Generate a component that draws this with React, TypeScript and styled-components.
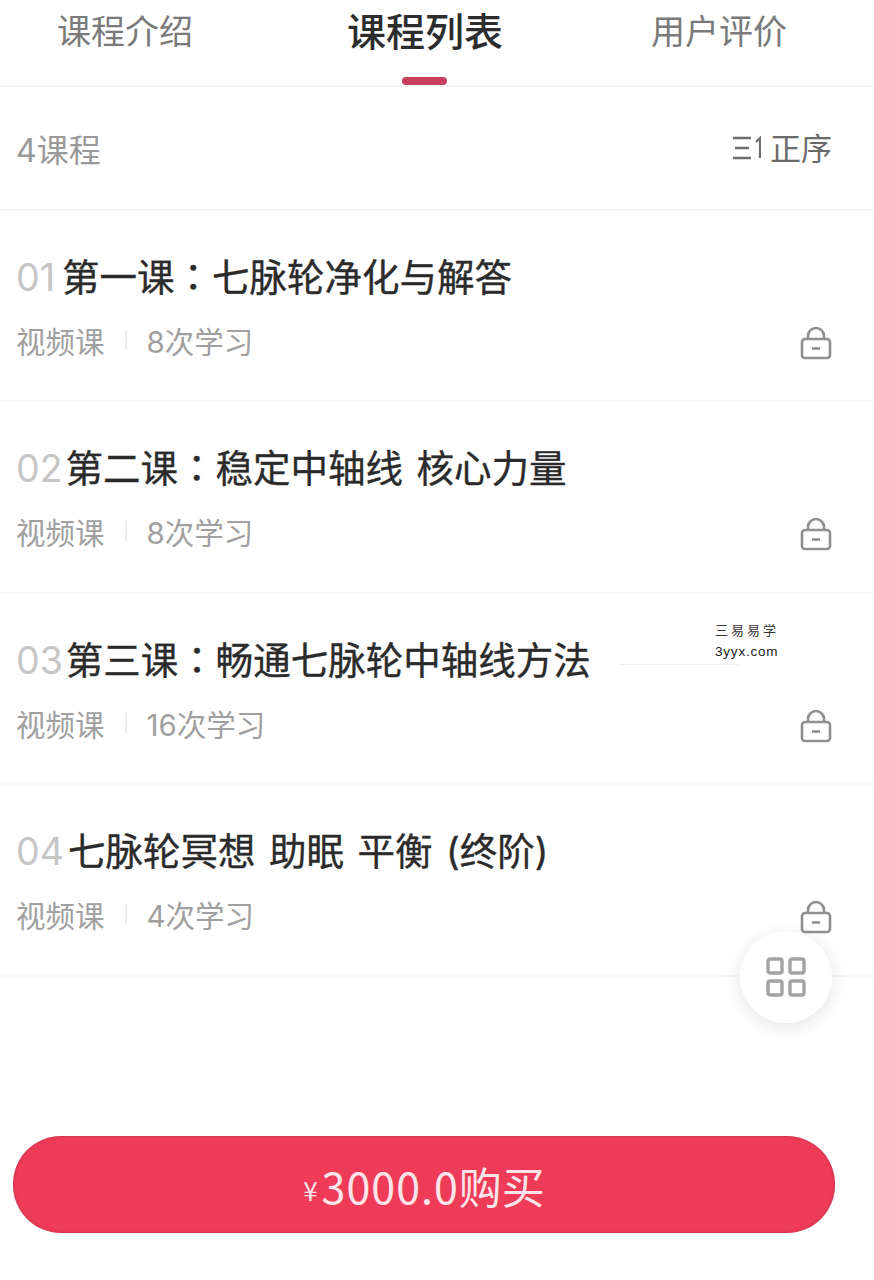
import React from 'react';
import styled, { createGlobalStyle } from 'styled-components';

const lessons = [
  { no: '01', gap: 7, label: '第一课', title: '七脉轮净化与解答', count: '8次学习' },
  { no: '02', gap: 3, label: '第二课', title: '稳定中轴线 核心力量', count: '8次学习' },
  { no: '03', gap: 3, label: '第三课', title: '畅通七脉轮中轴线方法', count: '16次学习' },
  { no: '04', gap: 4, label: '', title: '七脉轮冥想 助眠 平衡 (终阶)', count: '4次学习' },
];

const LockIcon = () => (
  <svg width="32" height="34" viewBox="0 0 32 34" fill="none" stroke="#8f8f8f" strokeWidth="2.6">
    <rect x="2" y="13" width="28" height="19" rx="3" />
    <path d="M8 13V10a8 8 0 0 1 16 0v3" />
    <path d="M12 22.5h8" />
  </svg>
);

const SortIcon = () => (
  <svg width="28" height="24" viewBox="0 0 28 24" fill="none" stroke="#6e6e6e" strokeWidth="2.6">
    <path d="M0 2h18M2 12h14M0 22h18" />
    <path d="M27 22V2l-4 4" strokeWidth="2.2" />
  </svg>
);

const GridIcon = () => (
  <svg width="40" height="40" viewBox="0 0 40 40" fill="none" stroke="#a3a3a3" strokeWidth="3.4">
    <rect x="2" y="2" width="14" height="14" rx="2" />
    <rect x="24" y="2" width="14" height="14" rx="2" />
    <rect x="2" y="24" width="14" height="14" rx="2" />
    <rect x="24" y="24" width="14" height="14" rx="2" />
  </svg>
);

const App: React.FC = () => (
  <Page>
    <GlobalStyle />
    <Tabs>
      <Tab>课程介绍</Tab>
      <ActiveTab>课程列表</ActiveTab>
      <Tab>用户评价</Tab>
    </Tabs>
    <SortBar>
      <Total>4课程</Total>
      <SortToggle>
        <SortIcon />
        <SortLabel>正序</SortLabel>
      </SortToggle>
    </SortBar>
    <List>
      {lessons.map(lesson => (
        <Lesson key={lesson.no}>
          <LessonTitle>
            <LessonNo $gap={lesson.gap}>{lesson.no}</LessonNo>
            {lesson.label && (
              <>
                {lesson.label}
                <Colon>：</Colon>
              </>
            )}
            {lesson.title}
          </LessonTitle>
          <LessonMeta>
            <MetaText>视频课</MetaText>
            <MetaDivider />
            <MetaText>{lesson.count}</MetaText>
            <LockSlot>
              <LockIcon />
            </LockSlot>
          </LessonMeta>
        </Lesson>
      ))}
    </List>
    <FloatingButton>
      <GridIcon />
    </FloatingButton>
    <Watermark>
      <span>三易易学</span>
      <WatermarkUrl>3yyx.com</WatermarkUrl>
    </Watermark>
    <BuyBar>
      <BuyButton>
        <Currency>¥</Currency>
        <Amount>3000.0</Amount>购买
      </BuyButton>
    </BuyBar>
  </Page>
);

const GlobalStyle = createGlobalStyle`
  html, body {
    margin: 0;
    padding: 0;
    background: #fff;
  }
`;

const Page = styled.div`
  position: relative;
  width: 874px;
  height: 1280px;
  overflow: hidden;
  display: flex;
  flex-direction: column;
  background: #fff;
  font-family: "Inter", "Noto Sans CJK SC", sans-serif;
`;

const Tabs = styled.div`
  display: grid;
  grid-template-columns: 347px 304px 1fr;
  height: 87px;
  box-sizing: border-box;
  border-bottom: 2px solid #f5f5f5;
`;

const Tab = styled.div`
  position: relative;
  padding-top: 7px;
  font-size: 34px;
  line-height: 50px;
  color: #7a7a7a;
  &:first-child {
    padding-left: 57px;
  }
`;

const ActiveTab = styled(Tab)`
  font-size: 39px;
  font-weight: 500;
  color: #2d2d2d;
  &::after {
    content: '';
    position: absolute;
    left: 55px;
    top: 77px;
    width: 45px;
    height: 8px;
    border-radius: 4px;
    background: #c8405f;
  }
`;

const SortBar = styled.div`
  display: flex;
  align-items: center;
  justify-content: space-between;
  height: 124px;
  padding: 0 42px 0 16px;
  border-bottom: 2px solid #f5f5f5;
  box-sizing: border-box;
`;

const Total = styled.span`
  font-size: 32px;
  color: #999;
`;

const SortToggle = styled.div`
  display: flex;
  align-items: center;
  gap: 9px;
  font-size: 31px;
  color: #6a6a6a;
`;

const SortLabel = styled.span`
  margin-top: -4px;
`;

const List = styled.div`
  display: flex;
  flex-direction: column;
`;

const Lesson = styled.div`
  height: 191.4px;
  box-sizing: border-box;
  padding: 39px 42px 0 16px;
  border-bottom: 2px solid #f7f7f7;
`;

const LessonTitle = styled.div`
  height: 56px;
  font-size: 37.5px;
  line-height: 56px;
  color: #2b2b2b;
  white-space: nowrap;
  word-spacing: 3px;
  -webkit-text-stroke: 0.35px #2b2b2b;
`;

const LessonNo = styled.span<{ $gap: number }>`
  margin-right: ${props => props.$gap}px;
  color: #c6c6c6;
  -webkit-text-stroke: 0;
`;

const Colon = styled.span`
  font-family: "Noto Sans CJK TC", sans-serif;
  line-height: 0;
`;

const LessonMeta = styled.div`
  display: flex;
  align-items: center;
  margin-top: 12px;
  height: 44px;
`;

const MetaText = styled.span`
  font-size: 29.5px;
  color: #a0a0a0;
`;

const MetaDivider = styled.span`
  width: 2px;
  height: 20px;
  margin: 0 20px;
  background: #ececec;
`;

const LockSlot = styled.span`
  display: flex;
  margin-left: auto;
  margin-top: 6px;
`;

const FloatingButton = styled.div`
  position: absolute;
  left: 740px;
  top: 931px;
  width: 92px;
  height: 92px;
  display: flex;
  align-items: center;
  justify-content: center;
  border-radius: 50%;
  background: #fff;
  box-shadow: 0 4px 18px rgba(0, 0, 0, 0.11);
`;

const Watermark = styled.div`
  position: absolute;
  left: 620px;
  top: 619px;
  width: 160px;
  height: 45px;
  padding-left: 95px;
  box-sizing: border-box;
  display: flex;
  flex-direction: column;
  align-items: flex-start;
  background: #fff;
  font-family: "Noto Sans CJK SC", serif;
  font-size: 13px;
  letter-spacing: 3px;
  line-height: 22px;
  color: #333;
  &::after {
    content: '';
    position: absolute;
    left: 0;
    bottom: -1px;
    width: 120px;
    border-bottom: 1px dotted #e4e4e4;
  }
`;

const WatermarkUrl = styled.span`
  font-family: "Liberation Sans", sans-serif;
  font-size: 13.5px;
  letter-spacing: 0.8px;
  color: #222;
`;

const BuyBar = styled.div`
  margin-top: auto;
  padding: 0 39px 47px 13px;
`;

const BuyButton = styled.div`
  height: 97px;
  display: flex;
  align-items: center;
  justify-content: center;
  border-radius: 48px;
  background: #ee3c58;
  box-shadow: inset 0 0 3px rgba(150, 40, 60, 0.6);
  font-family: "Noto Sans CJK SC", sans-serif;
  font-size: 43px;
  color: #fde4e8;
`;

const Currency = styled.span`
  font-size: 26px;
  margin-top: 10px;
  margin-right: 4px;
`;

const Amount = styled.span`
  letter-spacing: 1px;
`;

export default App;
